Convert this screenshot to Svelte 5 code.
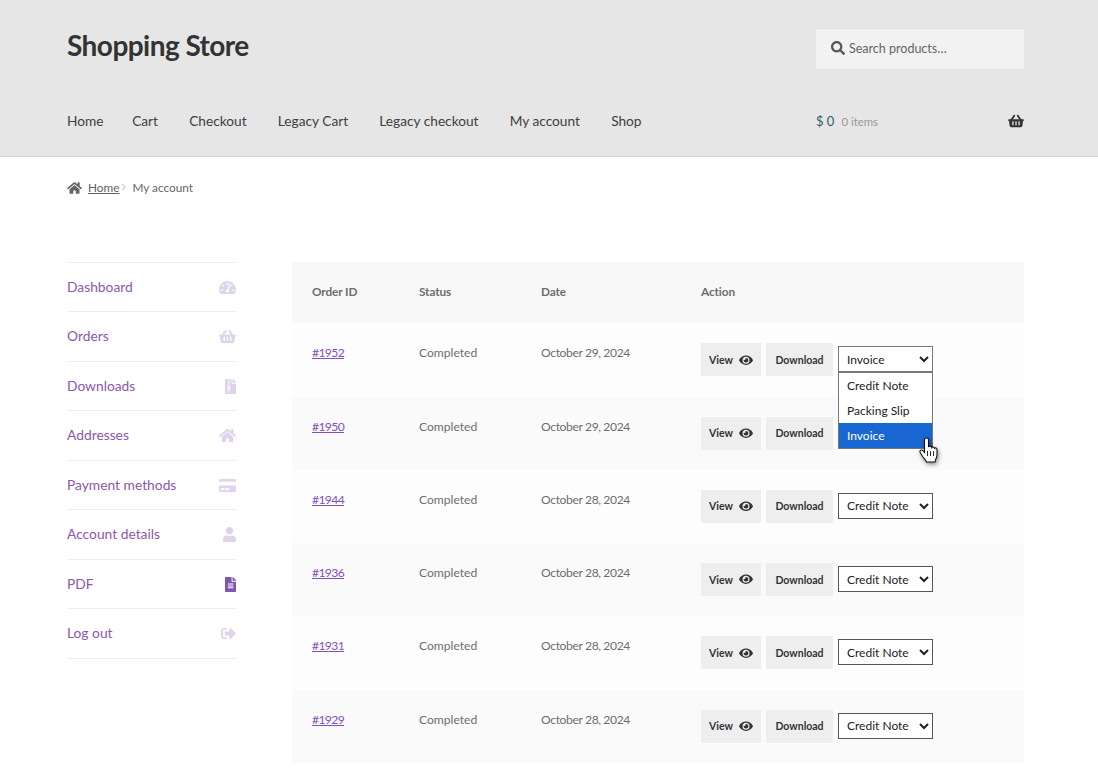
<script>
  const nav = ['Home', 'Cart', 'Checkout', 'Legacy Cart', 'Legacy checkout', 'My account', 'Shop'];
  const icons = {
    tach: ['0 0 576 512', 'M288 32C128.94 32 0 160.94 0 320c0 52.8 14.25 102.26 39.06 144.8 5.61 9.62 16.3 15.2 27.44 15.2h443c11.14 0 21.83-5.58 27.44-15.2C561.75 422.26 576 372.8 576 320c0-159.06-128.94-288-288-288zm0 64c14.71 0 26.58 10.13 30.32 23.65-1.11 2.26-2.64 4.23-3.45 6.67l-9.22 27.67c-5.13 3.49-10.97 6.01-17.64 6.01-17.67 0-32-14.33-32-32S270.33 96 288 96zM96 384c-17.67 0-32-14.33-32-32s14.33-32 32-32 32 14.33 32 32-14.33 32-32 32zm48-160c-17.67 0-32-14.33-32-32s14.33-32 32-32 32 14.33 32 32-14.33 32-32 32zm246.77-72.41l-61.33 184C343.13 347.33 352 364.54 352 384c0 11.72-3.38 22.55-8.88 32H232.88c-5.5-9.45-8.88-20.28-8.88-32 0-33.94 26.5-61.43 59.9-63.59l61.34-184.01c4.17-12.56 17.73-19.45 30.36-15.17 12.57 4.19 19.35 17.79 15.17 30.36zm14.66 57.2l15.52-46.55c3.47-1.29 7.13-2.23 11.05-2.23 17.67 0 32 14.33 32 32s-14.33 32-32 32c-11.38-.01-20.89-6.28-26.57-15.22zM480 384c-17.67 0-32-14.33-32-32s14.33-32 32-32 32 14.33 32 32-14.33 32-32 32z'],
    basket: ['0 0 576 512', 'M576 216v16c0 13.255-10.745 24-24 24h-8l-26.113 182.788C514.509 462.435 494.257 480 470.37 480H105.63c-23.887 0-44.139-17.565-47.518-41.212L32 256h-8c-13.255 0-24-10.745-24-24v-16c0-13.255 10.745-24 24-24h67.341l106.78-146.821c10.395-14.292 30.407-17.453 44.701-7.058 14.293 10.395 17.453 30.408 7.058 44.701L170.477 192h235.046L326.12 82.821c-10.395-14.292-7.234-34.306 7.059-44.701 14.291-10.395 34.306-7.235 44.701 7.058L484.659 192H552c13.255 0 24 10.745 24 24zM312 392V280c0-13.255-10.745-24-24-24s-24 10.745-24 24v112c0 13.255 10.745 24 24 24s24-10.745 24-24zm112 0V280c0-13.255-10.745-24-24-24s-24 10.745-24 24v112c0 13.255 10.745 24 24 24s24-10.745 24-24zm-224 0V280c0-13.255-10.745-24-24-24s-24 10.745-24 24v112c0 13.255 10.745 24 24 24s24-10.745 24-24z'],
    archive: ['0 0 384 512', 'M377 105L279.1 7c-4.5-4.5-10.6-7-17-7H256v128h128v-6.1c0-6.3-2.5-12.4-7-16.9zM128.4 336c-17.9 0-32.4 12.1-32.4 27 0 15 14.6 27 32.5 27s32.4-12.1 32.4-27-14.6-27-32.5-27zM224 136V0h-63.6v32h-32V0H24C10.7 0 0 10.7 0 24v464c0 13.3 10.7 24 24 24h336c13.3 0 24-10.7 24-24V160H248c-13.2 0-24-10.8-24-24zM95.9 32h32v32h-32zm32.3 384c-33.2 0-58-30.4-51.4-62.9L96.4 256v-32h32v-32h-32v-32h32v-32h-32V96h32V64h32v32h-32v32h32v32h-32v32h32v32h-32v32h22.1c5.7 0 10.7 4.1 11.8 9.7l17.3 87.7c6.4 32.4-18.4 62.6-51.4 62.6z'],
    home: ['0 0 576 512', 'M280.37 148.26L96 300.11V464a16 16 0 0 0 16 16l112.06-.29a16 16 0 0 0 15.92-16V368a16 16 0 0 1 16-16h64a16 16 0 0 1 16 16v95.64a16 16 0 0 0 16 16.05L464 480a16 16 0 0 0 16-16V300L295.67 148.26a12.19 12.19 0 0 0-15.3 0zM571.6 251.47L488 182.56V44.05a12 12 0 0 0-12-12h-56a12 12 0 0 0-12 12v72.61L318.47 43a48 48 0 0 0-61 0L4.34 251.47a12 12 0 0 0-1.6 16.9l25.5 31A12 12 0 0 0 45.15 301l235.22-193.74a12.19 12.19 0 0 1 15.3 0L530.9 301a12 12 0 0 0 16.9-1.6l25.5-31a12 12 0 0 0-1.7-16.93z'],
    card: ['0 0 576 512', 'M0 432c0 26.5 21.5 48 48 48h480c26.5 0 48-21.5 48-48V256H0v176zm192-68c0-6.6 5.4-12 12-12h136c6.6 0 12 5.4 12 12v40c0 6.6-5.4 12-12 12H204c-6.6 0-12-5.4-12-12v-40zm-128 0c0-6.6 5.4-12 12-12h72c6.6 0 12 5.4 12 12v40c0 6.6-5.4 12-12 12H76c-6.6 0-12-5.4-12-12v-40zM576 80v48H0V80c0-26.5 21.5-48 48-48h480c26.5 0 48 21.5 48 48z'],
    user: ['0 0 448 512', 'M224 256c70.7 0 128-57.3 128-128S294.7 0 224 0 96 57.3 96 128s57.3 128 128 128zm89.6 32h-16.7c-22.2 10.2-46.9 16-72.9 16s-50.6-5.8-72.9-16h-16.7C60.2 288 0 348.2 0 422.4V464c0 26.5 21.5 48 48 48h352c26.5 0 48-21.5 48-48v-41.6c0-74.2-60.2-134.4-134.4-134.4z'],
    file: ['0 0 384 512', 'M224 136V0H24C10.7 0 0 10.7 0 24v464c0 13.3 10.7 24 24 24h336c13.3 0 24-10.7 24-24V160H248c-13.2 0-24-10.8-24-24zm64 236c0 6.6-5.4 12-12 12H108c-6.6 0-12-5.4-12-12v-8c0-6.6 5.4-12 12-12h168c6.6 0 12 5.4 12 12v8zm0-64c0 6.6-5.4 12-12 12H108c-6.6 0-12-5.4-12-12v-8c0-6.6 5.4-12 12-12h168c6.6 0 12 5.4 12 12v8zm0-72v8c0 6.6-5.4 12-12 12H108c-6.6 0-12-5.4-12-12v-8c0-6.6 5.4-12 12-12h168c6.6 0 12 5.4 12 12zm96-114.1v6.1H256V0h6.1c6.4 0 12.5 2.5 17 7l97.9 98c4.5 4.5 7 10.6 7 16.9z'],
    signout: ['0 0 512 512', 'M497 273L329 441c-15 15-41 4.5-41-17v-96H152c-13.3 0-24-10.7-24-24v-96c0-13.3 10.7-24 24-24h136V88c0-21.4 25.9-32 41-17l168 168c9.3 9.4 9.3 24.6 0 34zM192 436v-40c0-6.6-5.4-12-12-12H96c-17.7 0-32-14.3-32-32V160c0-17.7 14.3-32 32-32h84c6.6 0 12-5.4 12-12V76c0-6.6-5.4-12-12-12H96c-53 0-96 43-96 96v192c0 53 43 96 96 96h84c6.6 0 12-5.4 12-12z'],
    search: ['0 0 512 512', 'M505 442.7L405.3 343c-4.5-4.5-10.6-7-17-7H372c27.6-35.3 44-79.7 44-128C416 93.1 322.9 0 208 0S0 93.1 0 208s93.1 208 208 208c48.3 0 92.7-16.4 128-44v16.3c0 6.4 2.5 12.5 7 17l99.7 99.7c9.4 9.4 24.6 9.4 33.9 0l28.3-28.3c9.4-9.4 9.4-24.6.1-34zM208 336c-70.7 0-128-57.2-128-128 0-70.7 57.2-128 128-128 70.7 0 128 57.2 128 128 0 70.7-57.2 128-128 128z'],
    eye: ['0 0 576 512', 'M572.52 241.4C518.29 135.59 410.93 64 288 64S57.68 135.64 3.48 241.41a32.35 32.35 0 0 0 0 29.19C57.71 376.41 165.07 448 288 448s230.32-71.64 284.52-177.41a32.35 32.35 0 0 0 0-29.19zM288 400a144 144 0 1 1 144-144 143.93 143.93 0 0 1-144 144zm0-240a95.31 95.31 0 0 0-25.31 3.79 47.85 47.85 0 0 1-66.9 66.9A95.78 95.78 0 1 0 288 160z']
  };
  const menu = [
    ['Dashboard', 'tach'], ['Orders', 'basket'], ['Downloads', 'archive'], ['Addresses', 'home'],
    ['Payment methods', 'card'], ['Account details', 'user'], ['PDF', 'file'], ['Log out', 'signout']
  ];
  const orders = [
    ['#1952', 'October 29, 2024', 'Invoice'],
    ['#1950', 'October 29, 2024', null],
    ['#1944', 'October 28, 2024', 'Credit Note'],
    ['#1936', 'October 28, 2024', 'Credit Note'],
    ['#1931', 'October 28, 2024', 'Credit Note'],
    ['#1929', 'October 28, 2024', 'Credit Note']
  ];
  const docs = ['Credit Note', 'Packing Slip', 'Invoice'];
</script>

{#snippet icon(name, cls)}
  <svg class={cls} viewBox={icons[name][0]} aria-hidden="true"><path d={icons[name][1]} /></svg>
{/snippet}

<div class="page">
  <header class="site-header">
    <div class="wrap top">
      <div class="title">Shopping Store</div>
      <div class="search">
        {@render icon('search', 'search-ic')}
        <span>Search products…</span>
      </div>
    </div>
    <div class="wrap bottom">
      <nav class="nav">
        {#each nav as n}<a href="#top">{n}</a>{/each}
      </nav>
      <div class="cart">
        <span class="amount">$ 0</span>
        <span class="count">0 items</span>
        {@render icon('basket', 'basket-ic')}
      </div>
    </div>
  </header>

  <div class="wrap crumbs">
    {@render icon('home', 'crumb-home')}
    <a href="#top">Home</a>
    <svg class="crumb-sep" viewBox="0 0 6 10" aria-hidden="true"><path d="M1 1l4 4-4 4" /></svg>
    <span>My account</span>
  </div>

  <main class="wrap content">
    <aside class="side">
      {#each menu as [label, ic]}
        <a href="#top" class="side-item" class:on={label === 'PDF'}>
          <span>{label}</span>
          {@render icon(ic, 'side-ic ic-' + ic)}
        </a>
      {/each}
    </aside>

    <table class="orders">
      <thead>
        <tr><th class="c1">Order ID</th><th class="c2">Status</th><th class="c3">Date</th><th>Action</th></tr>
      </thead>
      <tbody>
        {#each orders as [id, date, doc], i}
          <tr>
            <td><a class="oid" href="#top">{id}</a></td>
            <td>Completed</td>
            <td class="date">{date}</td>
            <td class="actions">
              <div class="act">
                <a class="btn" href="#top">View {@render icon('eye', 'eye-ic')}</a>
                <a class="btn" href="#top">Download</a>
                {#if doc}
                  <div class="sel-wrap">
                    <select class="sel" class:focus={i === 0} value={doc}>
                      {#each docs as d}<option>{d}</option>{/each}
                    </select>
                    {#if i === 0}
                      <div class="list">
                        {#each docs as d}
                          <div class="opt" class:active={d === 'Invoice'}>{d}</div>
                        {/each}
                      </div>
                      <svg class="hand" viewBox="0 0 19 26" aria-hidden="true">
                        <path d="M5.500 2.500c0-2 4-2 4 0V10c.5-1.200 3-1.200 3.200.5.5-1 2.700-.8 2.800.8.8-.8 2.500-.4 2.500 1.200V18c0 2.500-1.500 4-2 7H7.500c-.5-2-2-3-3.500-5L1.200 15.500c-1-1.800 1-3.200 2.500-2l1.800 2z" />
                        <path class="lines" d="M8.500 14v5M11.500 14v5M14.500 14v5" />
                      </svg>
                    {/if}
                  </div>
                {/if}
              </div>
            </td>
          </tr>
        {/each}
      </tbody>
    </table>
  </main>
</div>

<style>
  :global(body) {
    margin: 0;
    background: #fff;
    font-family: Lato, "Noto Sans", sans-serif;
    color: #6d6d6d;
    overflow: hidden;
  }
  a { color: inherit; text-decoration: none; }
  .wrap { width: 957px; margin-left: 67px; }

  .site-header {
    height: 156px;
    background: #e6e6e6;
    border-bottom: 1px solid #d6d6d6;
  }
  .top {
    display: flex;
    justify-content: space-between;
    padding-top: 28px;
    height: 41px;
  }
  .title {
    font-size: 28px;
    font-weight: 700;
    letter-spacing: -0.55px;
    line-height: 34px;
    color: #333;
  }
  .search {
    box-sizing: border-box;
    width: 208px;
    height: 41px;
    background: #f2f2f2;
    border-top: 1px solid #dcdcdc;
    display: flex;
    align-items: center;
    gap: 4px;
    padding: 0 0 2px 15px;
    font-size: 12.5px;
    color: #666;
  }
  .search-ic { width: 14px; height: 14px; fill: #555; }
  .bottom {
    display: flex;
    justify-content: space-between;
    align-items: center;
    margin-top: 41px;
    height: 20px;
  }
  .nav { display: flex; gap: 31.2px; font-size: 13.7px; color: #404040; }
  .nav a:first-child { margin-right: -2.5px; }
  .cart { width: 208px; display: flex; align-items: center; padding-top: 2px; font-size: 13px; }
  .amount { color: #3a5a6a; }
  .count { margin-left: 7px; font-size: 11.4px; color: #999; }
  .basket-ic { width: 16px; height: 14px; margin-left: auto; fill: #333; }

  .crumbs {
    display: flex;
    align-items: center;
    height: 20px;
    margin-top: 20px;
    font-size: 11.8px;
    color: #666;
  }
  .crumbs a { text-decoration: underline; margin-left: 6px; color: #60606a; }
  .crumb-home { width: 15px; height: 14px; margin-top: 2px; fill: #666; }
  .crumb-sep { width: 5px; height: 8px; margin: 0 6px 0 2px; fill: none; stroke: #ccc; stroke-width: 1.5; }

  .content {
    display: flex;
    justify-content: space-between;
    align-items: flex-start;
    margin-top: 65px;
  }
  .side { width: 169px; margin-top: -0.4px; border-bottom: 1px solid #eee; }
  .side-item {
    box-sizing: border-box;
    height: 49.5px;
    display: flex;
    align-items: center;
    justify-content: space-between;
    border-top: 1px solid #eee;
    font-size: 13.8px;
    color: #8d56ad;
    padding-bottom: 1px;
  }
  :global(.side-ic) { height: 15px; width: 17px; margin-top: 2px; fill: #7f54b3; opacity: 0.25; }
  :global(.ic-archive), :global(.ic-file) { width: 11.25px; }
  :global(.ic-user) { width: 13px; }
  :global(.ic-signout) { width: 15px; }
  .on :global(.side-ic) { opacity: 1; }

  .orders {
    width: 732px;
    border-collapse: collapse;
    table-layout: fixed;
    font-size: 12.1px;
    color: #6d6d6d;
  }
  th {
    height: 61.4px;
    padding: 0 20px 2px;
    box-sizing: border-box;
    text-align: left;
    background: #f8f8f8;
    font-weight: 700;
    font-size: 11.8px;
    letter-spacing: -0.1px;
  }
  .c1 { width: 107px; }
  .c2 { width: 122px; }
  .c3 { width: 160px; }
  td { height: 73.25px; padding: 0 20px; vertical-align: top; line-height: 20px; box-sizing: border-box; }
  td:not(.actions) { padding-top: 20px; }
  tbody tr:nth-child(odd) { background: #fdfdfd; }
  tbody tr:nth-child(even) { background: #fafafa; }
  .oid { color: #8250b8; text-decoration: underline; letter-spacing: -0.6px; }
  .date { letter-spacing: -0.37px; }

  .act { display: flex; align-items: center; gap: 5px; padding-top: 20px; }
  .btn {
    box-sizing: border-box;
    height: 33px;
    display: inline-flex;
    align-items: center;
    justify-content: center;
    gap: 6px;
    background: #eee;
    color: #333;
    font-size: 10.5px;
    font-weight: 700;
    padding: 0;
  }
  .btn:first-child { width: 60px; }
  .btn:nth-child(2) { width: 67px; }
  :global(.eye-ic) { width: 14px; height: 12.5px; fill: #333; }

  .sel-wrap { position: relative; width: 95px; height: 26px; margin-top: -1px; }
  .sel {
    box-sizing: border-box;
    width: 95px;
    height: 26px;
    border: 1px solid #555;
    border-radius: 0;
    background: #fff;
    font-family: Lato, sans-serif;
    font-size: 12px;
    color: #222;
    padding-left: 4px;
  }
  .sel.focus { border-color: #777; }
  .list {
    position: absolute;
    left: 0;
    top: 26px;
    width: 95px;
    box-sizing: border-box;
    border: 1px solid #767676;
    background: #fff;
    font-size: 12px;
    color: #222;
    z-index: 2;
  }
  .opt { height: 25px; line-height: 25px; padding-left: 8px; }
  .opt.active { background: #1967d2; color: #fff; }
  .hand {
    position: absolute;
    left: 81px;
    top: 91px;
    width: 19px;
    height: 26px;
    z-index: 3;
    filter: drop-shadow(1px 2px 2px rgba(0,0,0,.45));
  }
  .hand path { fill: #fff; stroke: #111; stroke-width: 1.1; }
  .hand .lines { fill: none; stroke-width: 0.9; }
</style>
